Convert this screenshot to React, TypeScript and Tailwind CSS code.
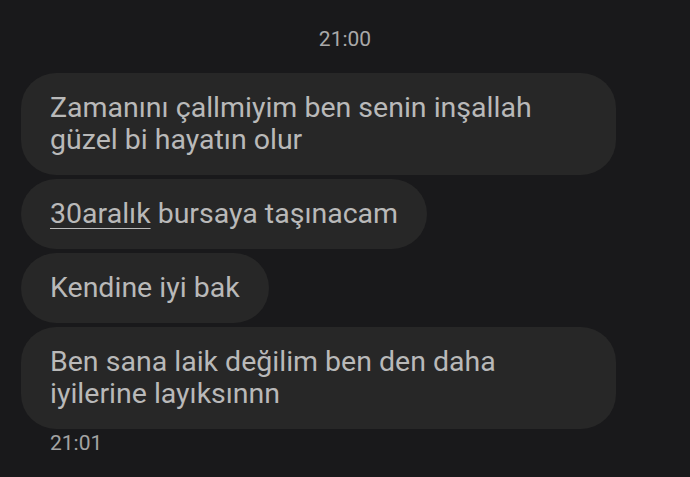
const messages: { id: number; content: React.ReactNode }[] = [
  { id: 1, content: "Zamanını çallmiyim ben senin inşallah güzel bi hayatın olur" },
  {
    id: 2,
    content: (
      <>
        <span className="underline decoration-1 underline-offset-[5px]">30aralık</span> bursaya taşınacam
      </>
    ),
  },
  { id: 3, content: "Kendine iyi bak" },
  { id: 4, content: "Ben sana laik değilim ben den daha iyilerine layıksınnn" },
];

export default function App() {
  return (
    <div
      className="w-[690px] h-[477px] bg-[#19191b] overflow-hidden"
      style={{ fontFamily: "Roboto, 'Noto Sans', sans-serif" }}
    >
      <div className="pt-[26px] text-center text-[21px] leading-[26px] text-[#a9a9a9]">21:00</div>

      <div className="mt-[21px] pl-[21px] flex flex-col items-start gap-[4px]">
        {messages.map((m) => (
          <div
            key={m.id}
            className="max-w-[595px] rounded-[35px] bg-[#272727] px-[29px] py-[19px] text-[28.5px] leading-[32px] text-[#b9b9b9]"
          >
            {m.content}
          </div>
        ))}
      </div>

      <div className="pl-[50px] mt-[1px] text-[21px] leading-[26px] text-[#a3a3a3]">21:01</div>
    </div>
  );
}
